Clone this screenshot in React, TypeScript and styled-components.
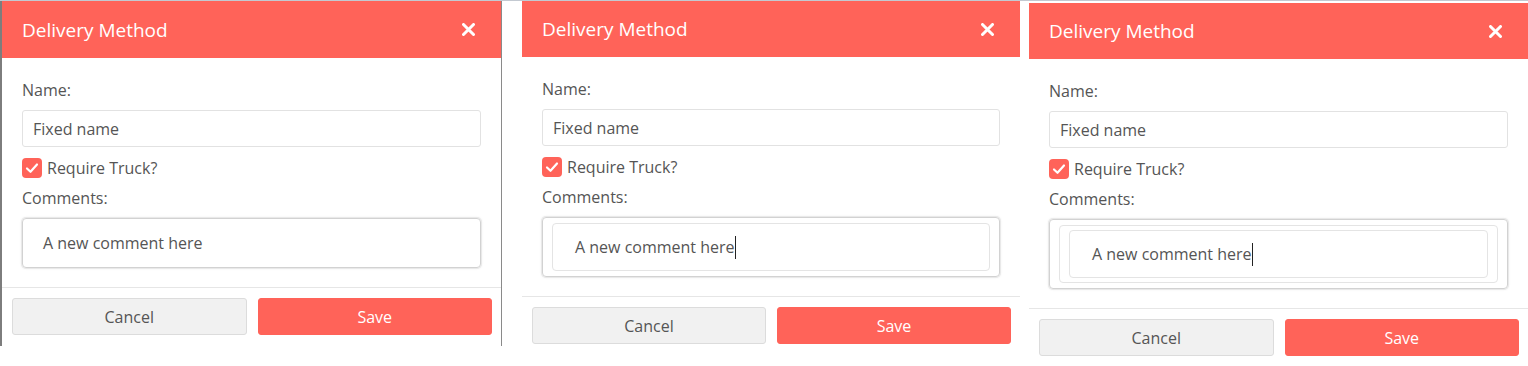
import styled, { createGlobalStyle } from "styled-components"

const GlobalStyle = createGlobalStyle`
  html, body {
    margin: 0;
    padding: 0;
    background: #ffffff;
    font-family: "Open Sans", "Noto Sans", sans-serif;
  }
`

const RED = "#ff6359"

const CloseIcon = () => (
  <svg width="13" height="13" viewBox="0 0 13 13">
    <path d="M1.5 1.5 L11.5 11.5 M11.5 1.5 L1.5 11.5" stroke="#fff" strokeWidth="3" strokeLinecap="round" />
  </svg>
)

const CheckIcon = () => (
  <svg width="20" height="20" viewBox="0 0 20 20">
    <path d="M5 10.5 L8.5 13.8 L15 6.5" stroke="#fff" strokeWidth="2.2" fill="none" strokeLinecap="round" strokeLinejoin="round" />
  </svg>
)

type CommentProps = { depth: number; caret: boolean }

// each level wraps the comment in one more bordered box
const CommentField = ({ depth, caret }: CommentProps) => {
  const text = (
    <CommentText>
      A new comment here
      {caret && <Caret />}
    </CommentText>
  )
  let inner = depth === 0 ? text : <InnerBox $last>{text}</InnerBox>
  for (let i = 1; i < depth; i++) {
    inner = <InnerBox>{inner}</InnerBox>
  }
  return <OuterBox $nested={depth > 0}>{inner}</OuterBox>
}

type DialogProps = {
  depth: number
  caret: boolean
  framed?: boolean
  width: number
  left: number
  top: number
  head: number
}

const Dialog = ({ depth, caret, framed, width, left, top, head }: DialogProps) => (
  <Panel $framed={framed} $width={width} $left={left} $top={top}>
    <Header $height={head}>
      <Title>Delivery Method</Title>
      <Close type="button"><CloseIcon /></Close>
    </Header>
    <Body>
      <Label>Name:</Label>
      <NameInput>Fixed name</NameInput>
      <CheckRow>
        <Box><CheckIcon /></Box>
        <span>Require Truck?</span>
      </CheckRow>
      <Label>Comments:</Label>
      <CommentField depth={depth} caret={caret} />
    </Body>
    <Footer>
      <Button type="button">Cancel</Button>
      <Button type="button" $primary>Save</Button>
    </Footer>
  </Panel>
)

const App = () => (
  <>
    <GlobalStyle />
    <Page>
      <Dialog depth={0} caret={false} framed width={502} left={0} top={0} head={57} />
      <Dialog depth={1} caret width={498} left={20} top={0} head={56} />
      <Dialog depth={2} caret width={499} left={9} top={2} head={56} />
    </Page>
  </>
)

export default App

const Page = styled.div`
  display: flex;
  align-items: flex-start;
  border-top: 1px solid #c3c9d1;
  height: 365px;
  overflow: hidden;
`

const Panel = styled.div<{ $framed?: boolean; $width: number; $left: number; $top: number }>`
  box-sizing: border-box;
  flex: none;
  width: ${p => p.$width}px;
  margin-left: ${p => p.$left}px;
  margin-top: ${p => p.$top}px;
  background: #fff;
  border-left: ${p => (p.$framed ? "2px solid #7d7d7d" : "none")};
  border-right: ${p => (p.$framed ? "1px solid #8a8a8a" : "none")};
`

const Header = styled.div<{ $height: number }>`
  height: ${p => p.$height}px;
  background: ${RED};
  display: flex;
  align-items: center;
  justify-content: space-between;
  padding: 0 26px 0 20px;
`

const Title = styled.span`
  color: #fff;
  font-size: 19px;
`

const Close = styled.button`
  background: none;
  border: none;
  padding: 0;
  display: flex;
`

const Body = styled.div`
  display: flex;
  flex-direction: column;
  gap: 9px;
  padding: 21px 20px 19px;
  color: #555;
  font-size: 16px;
`

const Label = styled.div`
  line-height: 22px;
`

const NameInput = styled.div`
  box-sizing: border-box;
  height: 37px;
  border: 1px solid #e2e2e2;
  border-radius: 3px;
  padding-left: 10px;
  display: flex;
  align-items: center;
`

const CheckRow = styled.label`
  display: flex;
  align-items: center;
  gap: 5px;
  height: 20px;
  margin-top: 2px;
`

const Box = styled.span`
  width: 20px;
  height: 20px;
  border-radius: 4px;
  background: ${RED};
  display: flex;
`

const OuterBox = styled.div<{ $nested: boolean }>`
  box-sizing: border-box;
  border: 1px solid #d2d2d2;
  border-radius: 4px;
  box-shadow: 0 0 0 1px #e9e9e9, 0 0 3px rgba(0, 0, 0, 0.12);
  padding: ${p => (p.$nested ? "5px 9px" : "0 20px")};
  min-height: 50px;
  display: flex;
  flex-direction: column;
  justify-content: center;
`

const InnerBox = styled.div<{ $last?: boolean }>`
  box-sizing: border-box;
  border: 1px solid #e4e4e4;
  border-radius: 4px;
  padding: ${p => (p.$last ? "0 22px" : "4px 9px")};
  min-height: 48px;
  display: flex;
  flex-direction: column;
  justify-content: center;
`

const CommentText = styled.div`
  display: flex;
  align-items: center;
  line-height: 22px;
`

const Caret = styled.span`
  width: 1px;
  height: 23px;
  background: #222;
`

const Footer = styled.div`
  display: grid;
  grid-template-columns: 1fr 1fr;
  gap: 11px;
  border-top: 1px solid #e6e6e6;
  padding: 10px 9px 11px 10px;
`

const Button = styled.button<{ $primary?: boolean }>`
  height: 37px;
  border-radius: 3px;
  font-family: "Open Sans", "Noto Sans", sans-serif;
  font-size: 16px;
  border: 1px solid ${p => (p.$primary ? RED : "#dcdcdc")};
  background: ${p => (p.$primary ? RED : "#f1f1f1")};
  color: ${p => (p.$primary ? "#fff" : "#555")};
`
